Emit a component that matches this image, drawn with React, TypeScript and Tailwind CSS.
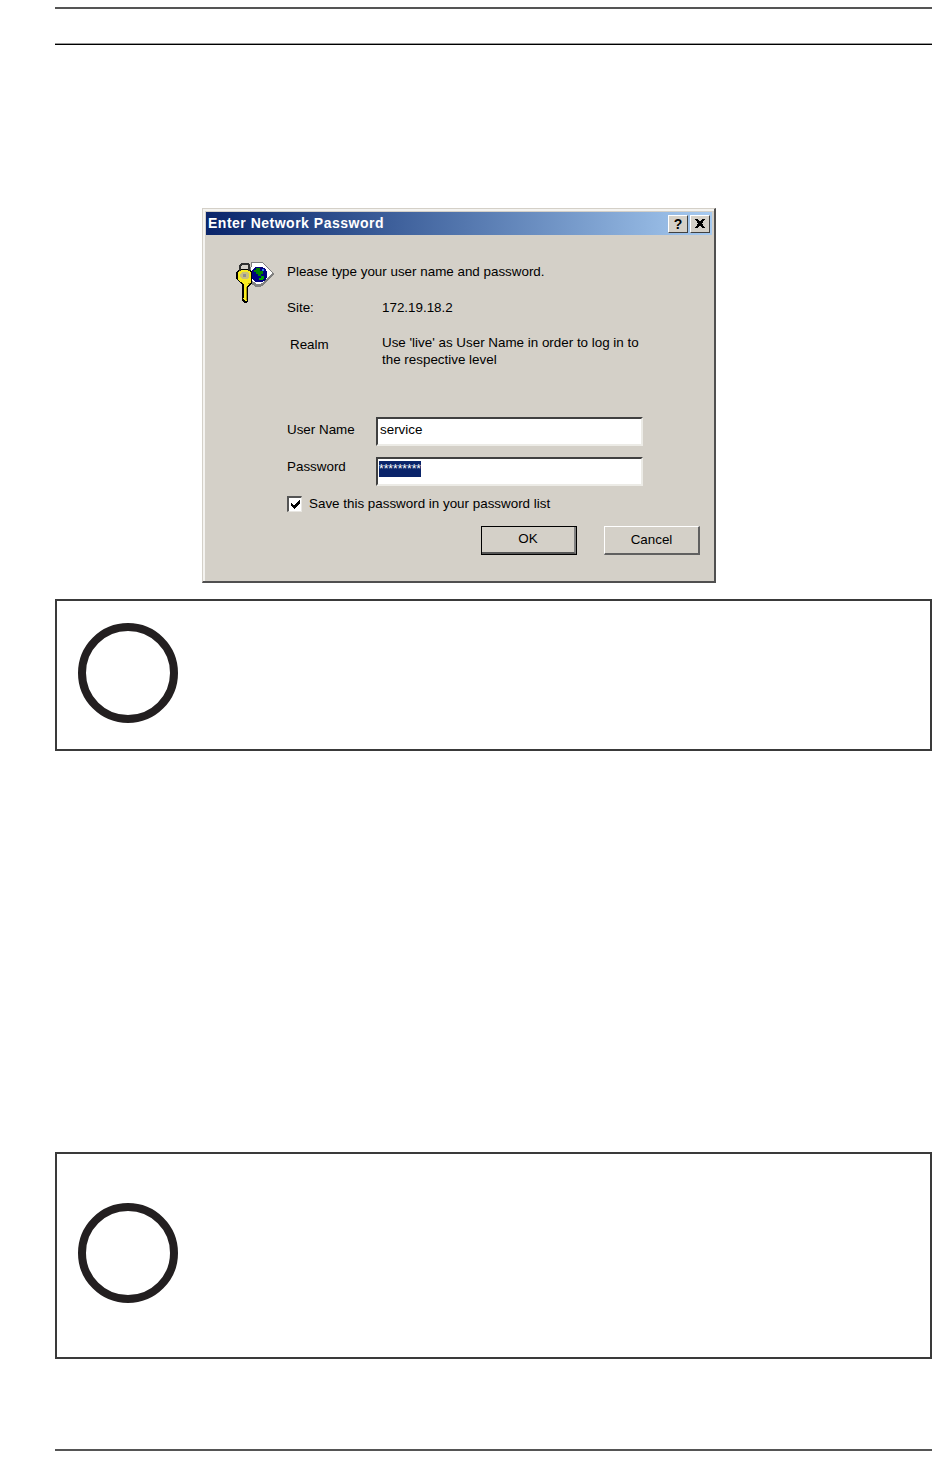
import React from "react";

function KeyIcon() {
  return (
    <svg width="40" height="43" viewBox="0 0 40 43" shapeRendering="crispEdges" className="block">
      {/* white diamond with grey shadow */}
      <path d="M16 1h11l2 2 2 2 2 2 2 2 2 2 2 2-2 2-2 2-2 2-2 2-2 2-2 2-2 1h-4l-3-2-4-2z" fill="#808080" />
      <path d="M17 2h10l2 2 2 2 2 2 2 2 2 2-2 2-2 2-2 2-2 2-2 2-2 1h-3l-3-2-4-2z" fill="#ffffff" />
      {/* globe */}
      <path d="M21 6h6l2 1 2 2 1 2v5l-1 2-2 2-2 1h-6l-2-1-2-2v-9l2-2z" fill="#000080" />
      <path d="M21 7h4v3h3v3h-2v2h-3v-2h-2v-2h-2V9h2z" fill="#008000" />
      <path d="M26 15h3v2l-2 2h-3v-2h2z" fill="#00a000" />
      <path d="M27 8h2v2h-2z" fill="#2878e0" />
      {/* key bow and shaft */}
      <path d="M4 8h10l3 3v11l-3 3-1 1v14l-2 2H9l-2-2v-3l-1-1 1-1v-2l-1-1 1-1v-2l-1-1 1-1v-4l-3-2-3-3V11z" fill="#000000" />
      <path d="M5 9h8l3 3v9l-3 3-1 2v13l-1 1h-1l-1-1-1-2 1-1v-1l-1-1 1-1v-2l-1-1 1-1v-5l-3-3-3-2v-8z" fill="#f8ec20" />
      <path d="M11 26h1v13h-1z" fill="#a89800" />
      <path d="M13 22h2v1h-2z" fill="#a89800" />
      <path d="M7 11h5l2 2v3l-2 2H7l-2-2v-3z" fill="#c8c080" />
      <path d="M8 13h3v3H8z" fill="#909090" />
      {/* key ring */}
      <path d="M6 2h7l2 2v6h-2V5l-1-1H7L6 5v5H4V4z" fill="#303030" />
    </svg>
  );
}

function Field({ label, labelClass, children }: { label: string; labelClass: string; children: React.ReactNode }) {
  return (
    <div className="flex h-[29px]">
      <span className={`w-[89px] leading-[20px] ${labelClass}`}>{label}</span>
      <div className="w-[267px] h-[29px] bg-white border-t-2 border-l-2 border-t-[#404040] border-l-[#404040] border-r-2 border-b-2 border-r-[#ecebe6] border-b-[#ecebe6] pl-[1px] pt-[2px]">
        {children}
      </div>
    </div>
  );
}

function Notice({ className }: { className: string }) {
  return (
    <div className={`border-2 border-[#3a3a3a] flex pl-[21px] ${className}`}>
      <div className="w-[100px] h-[100px] rounded-full border-[8px] border-[#231f20]" />
    </div>
  );
}

export default function App() {
  return (
    <div className="w-[950px] h-[1476px] bg-white pt-[7px] pl-[55px] overflow-hidden font-['Liberation_Sans',Arial,sans-serif]">
      <div className="w-[877px]">
        <div className="h-[2px] bg-[#555]" />
        <div className="h-[34px]" />
        <div className="h-[2px] border-t border-t-[#999] border-b border-b-black" />
        <div className="h-[163px]" />

        <div className="ml-[147px] w-[514px] h-[375px] bg-[#d4d0c8] border-t border-l border-t-[#d4d0c8] border-l-[#d4d0c8] border-r-2 border-b-2 border-r-[#505050] border-b-[#505050] text-[13.4px] text-black">
          <div className="h-full border-t-2 border-l-2 border-t-[#f4f3f0] border-l-[#f4f3f0] pt-[1px] pl-[1px] pr-[2px]">
            <div className="h-[23px] flex items-center justify-between bg-gradient-to-r from-[#0a246a] to-[#a6caf0] pl-[2px] pr-[2px]">
              <span className="text-white font-bold text-[14px] tracking-[0.5px] leading-[23px]">Enter Network Password</span>
              <div className="flex gap-[2px]">
                <div className="w-[20px] h-[18px] bg-[#d4d0c8] border-t border-l border-t-white border-l-white border-r border-b border-r-[#404040] border-b-[#404040] flex items-center justify-center font-bold text-[14px] leading-none">?</div>
                <div className="w-[20px] h-[18px] bg-[#d4d0c8] border-t border-l border-t-white border-l-white border-r border-b border-r-[#404040] border-b-[#404040] flex items-center justify-center">
                  <svg width="10" height="9" viewBox="0 0 10 9" shapeRendering="crispEdges">
                    <path d="M0 0h3l2 3 2-3h3L7 4.500 10 9H7L5 6 3 9H0l3-4.500z" fill="#000" />
                  </svg>
                </div>
              </div>
            </div>

            <div className="flex">
              <div className="w-[81px] pl-[29px] pt-[26px] shrink-0">
                <KeyIcon />
              </div>
              <div className="flex-1">
                <div className="mt-[27px] h-[20px] leading-[20px]">Please type your user name and password.</div>
                <div className="mt-[16px] h-[20px] leading-[20px] flex">
                  <span className="w-[95px]">Site:</span>
                  <span>172.19.18.2</span>
                </div>
                <div className="mt-[16px] h-[36px] flex">
                  <span className="w-[95px] pl-[3px] leading-[22px]">Realm</span>
                  <span className="leading-[17px] w-[270px]">Use 'live' as User Name in order to log in to the respective level</span>
                </div>
                <div className="mt-[47px]">
                  <Field label="User Name" labelClass="pt-[3px]">
                    <div className="leading-[18px] pl-[1px]">service</div>
                  </Field>
                </div>
                <div className="mt-[11px]">
                  <Field label="Password" labelClass="">
                    <div className="w-[42px] h-[16px] bg-[#0a246a] text-white text-[12px] leading-[16px] overflow-hidden whitespace-nowrap">*********</div>
                  </Field>
                </div>
                <div className="mt-[10px] h-[16px] flex items-center">
                  <div className="w-[15px] h-[16px] bg-white border-t-2 border-l-2 border-t-[#555] border-l-[#555] border-r border-b border-r-[#e8e6e1] border-b-[#e8e6e1] flex items-center justify-center">
                    <svg width="9" height="9" viewBox="0 0 9 9" shapeRendering="crispEdges">
                      <path d="M8 0h1v3L4 9H3L0 5V3l3 3z" fill="#000" />
                    </svg>
                  </div>
                  <span className="ml-[7px]">Save this password in your password list</span>
                </div>
                <div className="mt-[14px] flex">
                  <div className="ml-[194px] w-[96px] h-[29px] border border-black bg-[#d4d0c8] flex items-center justify-center">
                    <div className="w-full h-full border-r-2 border-b-2 border-r-[#808080] border-b-[#555] flex items-center justify-center">OK</div>
                  </div>
                  <div className="ml-[27px] w-[96px] h-[29px] bg-[#d4d0c8] border-t border-l border-t-white border-l-white border-r-2 border-b-2 border-r-[#606060] border-b-[#606060] flex items-center justify-center">Cancel</div>
                </div>
              </div>
            </div>
          </div>
        </div>

        <div className="h-[16px]" />
        <Notice className="h-[152px] pt-[22px]" />
        <div className="h-[401px]" />
        <Notice className="h-[207px] pt-[49px]" />
        <div className="h-[90px]" />
        <div className="h-[2px] bg-[#555]" />
      </div>
    </div>
  );
}
